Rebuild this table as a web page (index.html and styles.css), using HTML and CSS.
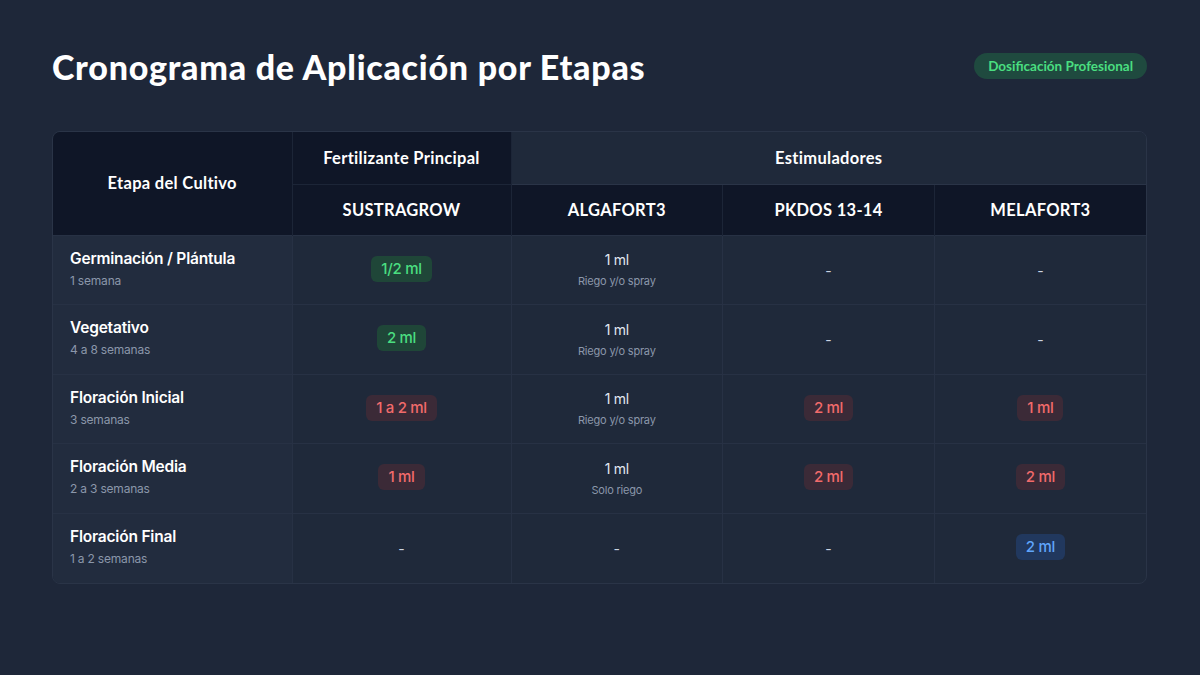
FILE: index.html
```html
<!DOCTYPE html>
<html lang="es">
<head>
<meta charset="utf-8">
<link rel="stylesheet" href="styles.css">
</head>
<body>
<div class="page">
  <header class="top">
    <h1 class="title">Cronograma de Aplicación por Etapas</h1>
    <span class="tag">Dosificación Profesional</span>
  </header>
  <div class="card">
    <table class="grid">
      <thead>
        <tr class="h1row">
          <th rowspan="2" class="stage-h">Etapa del Cultivo</th>
          <th class="group dark">Fertilizante Principal</th>
          <th colspan="3" class="group light">Estimuladores</th>
        </tr>
        <tr class="h2row">
          <th>SUSTRAGROW</th>
          <th>ALGAFORT3</th>
          <th>PKDOS 13-14</th>
          <th>MELAFORT3</th>
        </tr>
      </thead>
      <tbody>
        <tr>
          <td class="stage"><div class="name">Germinación / Plántula</div><div class="sub">1 semana</div></td>
          <td><span class="pill green">1/2 ml</span></td>
          <td><div class="dose">1 ml</div><div class="note">Riego y/o spray</div></td>
          <td><span class="dash">-</span></td>
          <td><span class="dash">-</span></td>
        </tr>
        <tr>
          <td class="stage"><div class="name">Vegetativo</div><div class="sub">4 a 8 semanas</div></td>
          <td><span class="pill green">2 ml</span></td>
          <td><div class="dose">1 ml</div><div class="note">Riego y/o spray</div></td>
          <td><span class="dash">-</span></td>
          <td><span class="dash">-</span></td>
        </tr>
        <tr>
          <td class="stage"><div class="name">Floración Inicial</div><div class="sub">3 semanas</div></td>
          <td><span class="pill red">1 a 2 ml</span></td>
          <td><div class="dose">1 ml</div><div class="note">Riego y/o spray</div></td>
          <td><span class="pill red">2 ml</span></td>
          <td><span class="pill red">1 ml</span></td>
        </tr>
        <tr>
          <td class="stage"><div class="name">Floración Media</div><div class="sub">2 a 3 semanas</div></td>
          <td><span class="pill red">1 ml</span></td>
          <td><div class="dose">1 ml</div><div class="note">Solo riego</div></td>
          <td><span class="pill red">2 ml</span></td>
          <td><span class="pill red">2 ml</span></td>
        </tr>
        <tr>
          <td class="stage"><div class="name">Floración Final</div><div class="sub">1 a 2 semanas</div></td>
          <td><span class="dash">-</span></td>
          <td><span class="dash">-</span></td>
          <td><span class="dash">-</span></td>
          <td><span class="pill blue">2 ml</span></td>
        </tr>
      </tbody>
    </table>
  </div>
</div>
</body>
</html>
```

FILE: styles.css
```css
* { box-sizing: border-box; }
html, body { margin: 0; padding: 0; }
body {
  width: 1200px;
  height: 675px;
  background: #1e2739;
  font-family: "Inter", "Lato", sans-serif;
  color: #f1f5f9;
  overflow: hidden;
}
.page {
  padding: 44px 53px 0 52px;
}
.top {
  display: flex;
  align-items: center;
  justify-content: space-between;
  height: 44px;
}
.title {
  margin: 0;
  font-family: "Lato", sans-serif;
  font-weight: 900;
  font-size: 34px;
  letter-spacing: 0.75px;
  color: #ffffff;
}
.tag {
  display: inline-block;
  padding: 6px 14px;
  border-radius: 14px;
  background: #1f4a3f;
  color: #4ade80;
  font-family: "Lato", sans-serif;
  font-weight: 700;
  font-size: 13.5px;
  line-height: 14px;
}
.card {
  margin-top: 43px;
  border: 1px solid #2a3447;
  border-radius: 8px;
  overflow: hidden;
  background: #1f293a;
}
.grid {
  width: 100%;
  border-collapse: collapse;
  table-layout: fixed;
}
.grid th {
  font-family: "Lato", sans-serif;
  font-weight: 700;
  color: #ffffff;
  font-size: 16.5px;
  letter-spacing: 0.3px;
  text-align: center;
  padding: 0;
}
.stage-h { width: 239px; background: #0f1627; border-right: 1px solid #1c2537; }
.h1row th { height: 52px; }
.group.dark { width: 219px; background: #0f1627; border-right: 1px solid #1c2537; border-bottom: 1px solid #1c2537; }
.group.light { background: #1f293a; border-bottom: 1px solid #2a3447; }
.h2row th { height: 51px; background: #0f1627; border-right: 1px solid #1c2537; }
.h2row th:last-child { border-right: none; }
.grid td {
  height: 69.5px;
  text-align: center;
  vertical-align: middle;
  border-top: 1px solid #273144;
  border-right: 1px solid #273144;
  padding: 0;
}
.grid td:last-child { border-right: none; }
.grid td.stage {
  text-align: left;
  padding-left: 17px;
  padding-bottom: 2px;
  background: #222c3e;
}
.name {
  font-weight: 600;
  font-size: 15.5px;
  color: #ffffff;
  line-height: 20px;
  letter-spacing: -0.2px;
}
.sub {
  font-size: 12px;
  color: #8b97aa;
  line-height: 16px;
  margin-top: 4px;
  letter-spacing: -0.2px;
}
.pill {
  display: inline-block;
  padding: 5px 10px;
  border-radius: 6px;
  font-size: 15px;
  font-weight: 500;
  line-height: 16px;
  letter-spacing: -0.3px;
  margin-bottom: 2px;
}
.pill.green { background: #1f4638; color: #4ade80; }
.pill.red { background: #3b2a37; color: #f26b6b; }
.pill.blue { background: #21385e; color: #60a5fa; }
.dose {
  font-size: 14px;
  color: #e2e8f0;
  line-height: 18px;
  letter-spacing: -0.3px;
}
.note {
  font-size: 11px;
  color: #8b97aa;
  line-height: 14px;
  margin-top: 5px;
  letter-spacing: -0.2px;
}
.dash {
  font-size: 14px;
  color: #cbd5e1;
}
```
